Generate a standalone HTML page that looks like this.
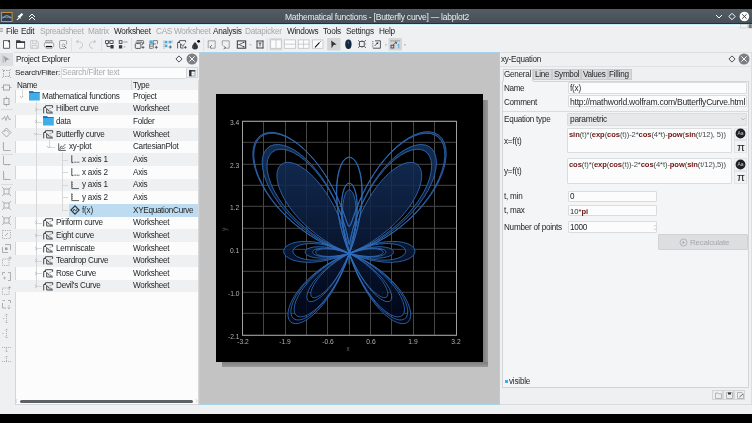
<!DOCTYPE html>
<html><head><meta charset="utf-8"><style>
html,body{margin:0;padding:0}
body{width:752px;height:423px;background:#000;position:relative;overflow:hidden;font-family:"Liberation Sans", sans-serif}
.a{position:absolute}
.t{position:absolute;white-space:nowrap;will-change:transform}
</style></head><body>
<div class="a" style="left:0px;top:9px;width:752px;height:405px;background:#eff0f1"></div><div class="a" style="left:0px;top:9px;width:752px;height:14px;background:linear-gradient(#535d64,#474f56)"></div><div class="a" style="left:0px;top:23px;width:752px;height:1px;background:#2a2f33"></div><div class="a" style="left:0px;top:24px;width:752px;height:1px;background:#c6ecf8"></div><div class="a" style="left:0px;top:25px;width:752px;height:1px;background:#f9f9f9"></div><svg class="a" style="left:1px;top:11.5px;" width="12" height="10" viewBox="0 0 12 10"><rect x="0.5" y="0.5" width="10.6" height="9" fill="#2f3e4c" stroke="#c8913f" stroke-width="1"/><path d="M1.4 6.4 Q5.8 0.8 10.2 6.4" fill="none" stroke="#9fc3dc" stroke-width="0.8"/><path d="M1 5.2 H10.6" stroke="#b8ccd8" stroke-width="0.6"/></svg><svg class="a" style="left:16px;top:12px;" width="8" height="9" viewBox="0 0 8 9"><path d="M1 8 L3.2 5.6" stroke="#fff" stroke-width="1.1"/><path d="M2.4 4.2 L5.6 1 L7.2 2.6 L4 5.8 Z" fill="#fff"/><path d="M2 3.8 L4.6 6.4" stroke="#fff" stroke-width="1.1"/></svg><svg class="a" style="left:28px;top:12px;" width="8" height="9" viewBox="0 0 8 9"><path d="M1 5 L4 2 L7 5 M1 8 L4 5 L7 8" fill="none" stroke="#fff" stroke-width="1"/></svg><div class="t" style="left:277.00px;width:200px;text-align:center;top:13.49px;font-size:8.52px;line-height:8.52px;color:#e8ecee;letter-spacing:-0.243px;">Mathematical functions - [Butterfly curve] — labplot2</div><svg class="a" style="left:714px;top:12px;" width="10" height="9" viewBox="0 0 10 9"><path d="M2 3 L5 6 L8 3" fill="none" stroke="#fff" stroke-width="1"/></svg><svg class="a" style="left:727px;top:12px;" width="10" height="9" viewBox="0 0 10 9"><path d="M5 1.3 L8.2 4.5 L5 7.7 L1.8 4.5 Z" fill="none" stroke="#fff" stroke-width="1"/></svg><svg class="a" style="left:739px;top:11px;" width="11" height="11" viewBox="0 0 11 11"><circle cx="5.4" cy="5.5" r="4.8" fill="#fcfcfc"/><path d="M3.2 3.3 L7.6 7.7 M7.6 3.3 L3.2 7.7" stroke="#31363b" stroke-width="0.9"/></svg><div class="t" style="left:5.60px;top:28.03px;font-size:8.24px;line-height:8.24px;color:#1e2123;letter-spacing:-0.217px;">File</div><div class="t" style="left:21.20px;top:28.03px;font-size:8.24px;line-height:8.24px;color:#1e2123;letter-spacing:-0.232px;">Edit</div><div class="t" style="left:39.70px;top:28.03px;font-size:8.24px;line-height:8.24px;color:#a5a8ab;letter-spacing:-0.278px;">Spreadsheet</div><div class="t" style="left:87.70px;top:28.03px;font-size:8.24px;line-height:8.24px;color:#a5a8ab;letter-spacing:-0.245px;">Matrix</div><div class="t" style="left:113.70px;top:28.03px;font-size:8.24px;line-height:8.24px;color:#1e2123;letter-spacing:-0.285px;">Worksheet</div><div class="t" style="left:156.00px;top:28.03px;font-size:8.24px;line-height:8.24px;color:#a5a8ab;letter-spacing:-0.294px;">CAS Worksheet</div><div class="t" style="left:213.20px;top:28.03px;font-size:8.24px;line-height:8.24px;color:#1e2123;letter-spacing:-0.251px;">Analysis</div><div class="t" style="left:245.40px;top:28.03px;font-size:8.24px;line-height:8.24px;color:#a5a8ab;letter-spacing:-0.258px;">Datapicker</div><div class="t" style="left:287.00px;top:28.03px;font-size:8.24px;line-height:8.24px;color:#1e2123;letter-spacing:-0.312px;">Windows</div><div class="t" style="left:322.90px;top:28.03px;font-size:8.24px;line-height:8.24px;color:#1e2123;letter-spacing:-0.252px;">Tools</div><div class="t" style="left:346.10px;top:28.03px;font-size:8.24px;line-height:8.24px;color:#1e2123;letter-spacing:-0.243px;">Settings</div><div class="t" style="left:378.70px;top:28.03px;font-size:8.24px;line-height:8.24px;color:#1e2123;letter-spacing:-0.277px;">Help</div><svg class="a" style="left:0px;top:27px;" width="4" height="6" viewBox="0 0 4 6"><path d="M0 1.5 H3 M0 3 H3 M0 4.5 H3" stroke="#888" stroke-width="0.6"/></svg><svg class="a" style="left:0;top:36px" width="410" height="16" viewBox="0 36 410 16"><path d="M3.5 40.6 H7.4 L9.6 42.8 V48.3 H3.5 Z" fill="#fcfcfc" stroke="#31363b" stroke-width="0.8"/><path d="M7.3 40.3 L10 43 V40.3 Z" fill="#31363b"/><path d="M16.5 41.6 V48.3 H24.6 V41.6" fill="#fcfcfc" stroke="#31363b" stroke-width="0.8"/><path d="M16.1 40.3 H20 L21 41.3 H25 V42.9 H16.1 Z" fill="#31363b"/><path d="M30.7 40.7 H37 L38.4 42.1 V48.3 H30.7 Z" fill="none" stroke="#bfc2c4" stroke-width="0.8"/><path d="M32.6 40.7 V43.6 H36.4 V40.7 M32.2 48.3 V45.4 H37 V48.3" fill="none" stroke="#bfc2c4" stroke-width="0.8"/><rect x="45.8" y="40.5" width="6.2" height="2.4" fill="#d0d2d4" stroke="#8c8f92" stroke-width="0.6"/><rect x="44.3" y="42.9" width="9.4" height="4" rx="1" fill="#fcfcfc" stroke="#8c8f92" stroke-width="0.8"/><rect x="46" y="45.9" width="6" height="1.2" fill="#111"/><path d="M46 47.1 V48.5 H52 V47.1" fill="none" stroke="#8c8f92" stroke-width="0.6"/><path d="M60.6 40.5 H65.6 Q66.6 40.5 66.6 41.5 V44.5 M65 48.5 H60.6 Q59.6 48.5 59.6 47.5 V41.5 Q59.6 40.5 60.6 40.5" fill="none" stroke="#8c8f92" stroke-width="0.8"/><circle cx="63.6" cy="45.4" r="1.4" fill="none" stroke="#8c8f92" stroke-width="0.7"/><path d="M64.6 46.4 L66.4 48.2" stroke="#31363b" stroke-width="0.9"/><path d="M71.4 38 V51" stroke="#d8dadc" stroke-width="0.8"/><path d="M101.7 38 V51" stroke="#d8dadc" stroke-width="0.8"/><path d="M131.6 38 V51" stroke="#d8dadc" stroke-width="0.8"/><path d="M203.7 38 V51" stroke="#d8dadc" stroke-width="0.8"/><path d="M267.3 38 V51" stroke="#d8dadc" stroke-width="0.8"/><path d="M77 41.5 Q82.6 41.5 82.6 45 Q82.6 48.3 79 48.4" fill="none" stroke="#bfc2c4" stroke-width="0.8"/><path d="M78.4 40 L76 41.6 L78.4 43.2" fill="none" stroke="#bfc2c4" stroke-width="0.8"/><path d="M95 41.5 Q89.4 41.5 89.4 45 Q89.4 48.3 93 48.4" fill="none" stroke="#bfc2c4" stroke-width="0.8"/><path d="M93.6 40 L96 41.6 L93.6 43.2" fill="none" stroke="#bfc2c4" stroke-width="0.8"/><rect x="105.6" y="40.7" width="2.9" height="2.7" fill="none" stroke="#31363b" stroke-width="0.8"/><rect x="109.8" y="40.7" width="3.3" height="2.7" fill="none" stroke="#31363b" stroke-width="0.8"/><path d="M107 43.4 V46.5 H110.5" fill="none" stroke="#31363b" stroke-width="0.8"/><rect x="110.4" y="45" width="3.2" height="3.5" fill="#31363b"/><rect x="119.2" y="40.7" width="2.8" height="2.7" fill="none" stroke="#31363b" stroke-width="0.8"/><rect x="118.9" y="45.2" width="3.3" height="3.3" fill="#31363b"/><path d="M123.4 42 H127.6" stroke="#9da0a3" stroke-width="1.1"/><path d="M123.8 46.8 H125.2" stroke="#9da0a3" stroke-width="1.2"/><path d="M136.6 40.6 H142.8 Q143.6 40.6 143.6 41.4 V44" fill="none" stroke="#31363b" stroke-width="0.7"/><path d="M135.6 42.2 H141.6 Q142.4 42.2 142.4 43 V45" fill="none" stroke="#31363b" stroke-width="0.7"/><rect x="135.3" y="43.6" width="5.6" height="4.8" rx="0.8" fill="none" stroke="#31363b" stroke-width="0.8"/><path d="M143 46 V48.8 M141.6 47.4 H144.4" stroke="#31363b" stroke-width="0.7"/><rect x="149.4" y="40.4" width="3.2" height="2.9" fill="#3daee9"/><path d="M153.3 40.6 H157.4 V44 M149.6 44 H156 M149.6 46.2 H153 M153.3 40.6 V48.4 M149.6 44 V48.4 H152.6" fill="none" stroke="#31363b" stroke-width="0.6"/><path d="M156.3 45.8 V48.8 M154.8 47.3 H157.8" stroke="#31363b" stroke-width="0.7"/><rect x="164.8" y="40.8" width="2.6" height="2.6" fill="#3daee9"/><rect x="168.6" y="40.8" width="2.6" height="2.6" fill="#3daee9"/><rect x="164.8" y="44.6" width="2.6" height="2.6" fill="#3daee9"/><path d="M163.9 40.5 V48.5 M172 40.5 V43" stroke="#31363b" stroke-width="0.5" stroke-dasharray="1 0.8"/><path d="M170.3 45.4 V48.6 M168.7 47 H171.9" stroke="#31363b" stroke-width="0.7"/><path d="M177.6 48.4 V42.6 M179.6 40.6 H185.6 V42.4" fill="none" stroke="#31363b" stroke-width="0.8"/><path d="M177.3 42.9 L179.9 40.3 V42.9 Z" fill="#31363b"/><path d="M180.6 43.4 V48 H183.6" fill="none" stroke="#31363b" stroke-width="0.8"/><path d="M181 44 L182.8 46.4 L184.6 43.6" fill="none" stroke="#31363b" stroke-width="0.7"/><path d="M185.4 46 V48.8 M184 47.4 H186.8" stroke="#31363b" stroke-width="0.7"/><path d="M195 42 Q198 45.5 198 46.6 A3 3 0 0 1 192 46.6 Q192 45.5 195 42 Z" fill="#31363b"/><path d="M194 47.8 A1.5 1.5 0 0 1 193.2 46.2" fill="none" stroke="#777" stroke-width="0.5"/><circle cx="198.6" cy="41.3" r="1.4" fill="#000"/><path d="M208.2 48.2 V40.8 H215.2 V48.2 H210.6" fill="none" stroke="#8c8f92" stroke-width="0.8"/><path d="M211.8 45.2 L209.8 47.2 L211.4 48.4" fill="none" stroke="#31363b" stroke-width="0.7"/><path d="M222.3 45.6 V40.8 H229.2 V48.2 H225" fill="none" stroke="#8c8f92" stroke-width="0.8"/><path d="M223.6 46.2 L225.6 47.6 L223.6 49" fill="none" stroke="#31363b" stroke-width="0.7"/><rect x="237.3" y="40.9" width="8.4" height="7.3" fill="none" stroke="#31363b" stroke-width="1"/><path d="M239.2 44.6 L243.6 42.4 M239.2 44.6 L243.6 46.8 M237.5 44.6 H239.2" fill="none" stroke="#31363b" stroke-width="0.7"/><circle cx="243.8" cy="42.4" r="0.7" fill="#31363b"/><circle cx="243.8" cy="46.8" r="0.7" fill="#31363b"/><path d="M249.6 44.8 H251.4" stroke="#8c8f92" stroke-width="0.7"/><path d="M256.6 41 H263.4 M256.6 48 H263.4 M257 40.6 V48.4 M263 40.6 V48.4" stroke="#31363b" stroke-width="0.9"/><path d="M258.6 43 H261.4 M260 43 V46.4" stroke="#31363b" stroke-width="0.8"/><rect x="269.4" y="38.1" width="12.8" height="12.4" rx="0.8" fill="#d9dbdd"/><rect x="270.7" y="39.9" width="10.6" height="8.4" fill="#fcfcfc" stroke="#bfc2c4" stroke-width="0.8"/><path d="M276.0 39.9 V48.3" stroke="#bfc2c4" stroke-width="0.8"/><rect x="284.3" y="39.9" width="11.1" height="8.4" fill="#fcfcfc" stroke="#bfc2c4" stroke-width="0.8"/><path d="M284.3 44.2 H295.4" stroke="#bfc2c4" stroke-width="0.8"/><rect x="298.3" y="39.9" width="10.7" height="8.4" fill="#fcfcfc" stroke="#bfc2c4" stroke-width="0.8"/><path d="M303.6 39.9 V48.3" stroke="#bfc2c4" stroke-width="0.8"/><path d="M298.3 44.2 H309" stroke="#bfc2c4" stroke-width="0.8"/><rect x="312.4" y="39.9" width="10.6" height="8.4" fill="#fcfcfc" stroke="#bfc2c4" stroke-width="0.8"/><path d="M315 47.3 L319.6 42.4" stroke="#111" stroke-width="1.1"/><path d="M319.6 42.4 L321.2 40.9" stroke="#999" stroke-width="1"/><rect x="327.1" y="38" width="13.4" height="12.5" rx="0.8" fill="#d4d6d8"/><path d="M331.2 40.5 L336.6 44.4 L333.6 45 L331.6 48.3 Z" fill="#31363b"/><ellipse cx="348.4" cy="44.3" rx="3.2" ry="4.8" fill="#16283c"/><path d="M348.4 41.5 V43.5" stroke="#3d7fc4" stroke-width="0.9"/><rect x="359.6" y="41.6" width="4.6" height="4.8" fill="none" stroke="#31363b" stroke-width="0.8"/><path d="M358 40.2 L359.4 41.4 M366 40.2 L364.4 41.4 M358 47.8 L359.4 46.6 M366 47.8 L364.4 46.6 M362 40 V40.8 M362 47.2 V48 M357.8 44 H358.6 M365.4 44 H366.2" stroke="#31363b" stroke-width="0.7"/><path d="M375 40.8 H380.4 V48.2 H373" fill="none" stroke="#31363b" stroke-width="0.8"/><path d="M372.8 41 V48" stroke="#31363b" stroke-width="0.7" stroke-dasharray="1 0.8"/><path d="M374.6 46 L377.6 43" stroke="#31363b" stroke-width="0.8"/><rect x="376.6" y="42.4" width="1.6" height="1.6" fill="#31363b"/><path d="M385 44.8 H386.8" stroke="#8c8f92" stroke-width="0.7"/><rect x="388.6" y="38" width="13.4" height="12.5" rx="0.8" fill="#d4d6d8"/><path d="M390.6 40.9 H399.6" stroke="#31363b" stroke-width="0.7" stroke-dasharray="1 1"/><rect x="391" y="45.2" width="2.8" height="2.8" fill="none" stroke="#31363b" stroke-width="0.8"/><path d="M393 45 L396.4 42.2 M394.8 42.2 H396.4 V43.8" fill="none" stroke="#31363b" stroke-width="0.7"/><path d="M397.6 45 L398.8 44.2 V48.4" fill="none" stroke="#3daee9" stroke-width="0.9"/><path d="M404 44.8 H405.8" stroke="#8c8f92" stroke-width="0.7"/></svg><svg class="a" style="left:740px;top:24px;" width="12" height="5" viewBox="0 0 12 5"><rect x="0.5" y="0.5" width="7" height="3.5" fill="none" stroke="#c4c6c8" stroke-width="0.6"/><rect x="8.6" y="0.2" width="3.2" height="4" fill="#777"/></svg><div class="a" style="left:0px;top:53px;width:13px;height:13px;background:#dcdee0"></div><svg class="a" style="left:1px;top:53.9px;" width="11" height="11" viewBox="0 0 11 11"><path d="M3 2 L8.5 5.5 L5.5 6 L4.2 8.8 Z" fill="#9a9da0"/><path d="M2.2 1.5 V9" stroke="#9a9da0" stroke-width="0.7"/></svg><svg class="a" style="left:1px;top:68.1px;" width="11" height="11" viewBox="0 0 11 11"><rect x="2.5" y="2.5" width="6" height="6" fill="none" stroke="#9a9da0" stroke-width="0.9" stroke-dasharray="1.5 1"/><path d="M1 1 L2.5 2.5 M10 1 L8.5 2.5 M1 10 L2.5 8.5 M10 10 L8.5 8.5" stroke="#9a9da0" stroke-width="0.7"/></svg><svg class="a" style="left:1px;top:82.2px;" width="11" height="11" viewBox="0 0 11 11"><rect x="2.5" y="3" width="6" height="5" fill="none" stroke="#9a9da0" stroke-width="0.9"/><path d="M0.5 5.5 H2.5 M8.5 5.5 H10.5" stroke="#9a9da0" stroke-width="0.8"/></svg><svg class="a" style="left:1px;top:96.4px;" width="11" height="11" viewBox="0 0 11 11"><rect x="3" y="2.5" width="5" height="6" fill="none" stroke="#9a9da0" stroke-width="0.9"/><path d="M5.5 0.5 V2.5 M5.5 8.5 V10.5" stroke="#9a9da0" stroke-width="0.8"/></svg><svg class="a" style="left:1px;top:112.5px;" width="11" height="11" viewBox="0 0 11 11"><path d="M0.5 6 L2 6 L3.5 3.5 L5 7.5 L6.5 2.5 L8 6.5 L10 6" fill="none" stroke="#9a9da0" stroke-width="0.8"/></svg><svg class="a" style="left:1px;top:126.7px;" width="11" height="11" viewBox="0 0 11 11"><path d="M5.5 1 L10 5.5 L5.5 10 L1 5.5 Z" fill="none" stroke="#9a9da0" stroke-width="0.9"/><path d="M3 5 Q5.5 1.5 8 6" fill="none" stroke="#9a9da0" stroke-width="0.7"/></svg><svg class="a" style="left:1px;top:140.8px;" width="11" height="11" viewBox="0 0 11 11"><path d="M2.5 1 V9.5 H9.5" fill="none" stroke="#9a9da0" stroke-width="0.8"/><path d="M1.5 3 H2.5 M1.5 6 H2.5" stroke="#9a9da0" stroke-width="0.6"/></svg><svg class="a" style="left:1px;top:155.0px;" width="11" height="11" viewBox="0 0 11 11"><path d="M2.5 1 V9.5 H9.5" fill="none" stroke="#9a9da0" stroke-width="0.8"/><path d="M5 9.5 V10.5 M7.5 9.5 V10.5" stroke="#9a9da0" stroke-width="0.6"/></svg><svg class="a" style="left:1px;top:169.9px;" width="11" height="11" viewBox="0 0 11 11"><path d="M2.5 1 V9.5 H9.5" fill="none" stroke="#9a9da0" stroke-width="0.8"/><path d="M2.5 4 H3.5 M2.5 7 H3.5 M5 8.5 V9.5" stroke="#9a9da0" stroke-width="0.6"/></svg><svg class="a" style="left:1px;top:186.1px;" width="11" height="11" viewBox="0 0 11 11"><rect x="3" y="3" width="5" height="5" fill="none" stroke="#9a9da0" stroke-width="0.8"/><path d="M1 1 L3 3 M10 1 L8 3 M1 10 L3 8 M10 10 L8 8" stroke="#9a9da0" stroke-width="0.7"/></svg><svg class="a" style="left:1px;top:200.3px;" width="11" height="11" viewBox="0 0 11 11"><rect x="3" y="3" width="5" height="5" fill="none" stroke="#9a9da0" stroke-width="0.8"/><path d="M1 1 L3 3 M10 1 L8 3 M1 10 L3 8 M10 10 L8 8" stroke="#9a9da0" stroke-width="0.7"/></svg><svg class="a" style="left:1px;top:214.9px;" width="11" height="11" viewBox="0 0 11 11"><rect x="3" y="3" width="5" height="5" fill="none" stroke="#9a9da0" stroke-width="0.8"/><path d="M1 1 L3 3 M10 1 L8 3 M1 10 L3 8 M10 10 L8 8" stroke="#9a9da0" stroke-width="0.7"/></svg><svg class="a" style="left:1px;top:228.6px;" width="11" height="11" viewBox="0 0 11 11"><rect x="1.5" y="1.5" width="8" height="8" fill="none" stroke="#9a9da0" stroke-width="0.8" stroke-dasharray="1.2 1.2"/><path d="M4 7 L7 4" stroke="#9a9da0" stroke-width="0.8"/></svg><svg class="a" style="left:1px;top:242.8px;" width="11" height="11" viewBox="0 0 11 11"><path d="M1.5 4 V9.5 H7 M4 1.5 H9.5 V7" fill="none" stroke="#9a9da0" stroke-width="0.8"/><rect x="4" y="4.5" width="2.5" height="2.5" fill="#9a9da0"/></svg><svg class="a" style="left:1px;top:256.3px;" width="11" height="11" viewBox="0 0 11 11"><rect x="1.5" y="3" width="6.5" height="6.5" fill="none" stroke="#9a9da0" stroke-width="0.8" stroke-dasharray="1.2 1.2"/><path d="M9 0.5 V3.5 M7.5 2 H10.5" stroke="#9a9da0" stroke-width="0.7"/></svg><svg class="a" style="left:1px;top:270.5px;" width="11" height="11" viewBox="0 0 11 11"><path d="M1.5 1.5 H4 M1.5 1.5 V4 M7 1.5 H9.5 V9.5 H7" fill="none" stroke="#9a9da0" stroke-width="0.8"/><path d="M2 7 H5 M3.5 5.5 V8.5" stroke="#9a9da0" stroke-width="0.6"/></svg><svg class="a" style="left:1px;top:284.9px;" width="11" height="11" viewBox="0 0 11 11"><rect x="1.5" y="3" width="6.5" height="6.5" fill="none" stroke="#9a9da0" stroke-width="0.8" stroke-dasharray="1.2 1.2"/><path d="M8.5 1 V4 M7 2.5 H10" stroke="#9a9da0" stroke-width="0.6"/></svg><svg class="a" style="left:1px;top:299.0px;" width="11" height="11" viewBox="0 0 11 11"><path d="M1.5 1.5 H4 M1.5 4 V9 H5 M7 1.5 H9.5 V4" fill="none" stroke="#9a9da0" stroke-width="0.8"/><path d="M8 6 V10 M6.5 8.5 L8 10 L9.5 8.5" fill="none" stroke="#9a9da0" stroke-width="0.6"/></svg><svg class="a" style="left:1px;top:313.2px;" width="11" height="11" viewBox="0 0 11 11"><path d="M5.5 1 V10 M4 2.5 L5.5 1 L7 2.5 M4 8.5 L5.5 10 L7 8.5 M2 5.5 H3.5" fill="none" stroke="#9a9da0" stroke-width="0.7" stroke-dasharray="1.2 0.8"/></svg><svg class="a" style="left:1px;top:327.9px;" width="11" height="11" viewBox="0 0 11 11"><path d="M5.5 1 V10 M4 2.5 L5.5 1 L7 2.5 M4 8.5 L5.5 10 L7 8.5 M1.5 5.5 H3.5" fill="none" stroke="#9a9da0" stroke-width="0.7" stroke-dasharray="1.2 0.8"/></svg><svg class="a" style="left:1px;top:342.0px;" width="11" height="11" viewBox="0 0 11 11"><path d="M1 5.5 H10 M5.5 5.5 V10 M4 8.5 L5.5 10 L7 8.5" fill="none" stroke="#9a9da0" stroke-width="0.7" stroke-dasharray="1.2 0.8"/></svg><svg class="a" style="left:1px;top:354.5px;" width="11" height="11" viewBox="0 0 11 11"><path d="M1 6.5 H10 M5.5 1 V6.5 M4 2.5 L5.5 1 L7 2.5" fill="none" stroke="#9a9da0" stroke-width="0.7" stroke-dasharray="1.2 0.8"/></svg><div class="a" style="left:0.5px;top:109.4px;width:12.5px;height:0.7px;background:#d9dbdd"></div><div class="a" style="left:0.5px;top:154.2px;width:12.5px;height:0.7px;background:#d9dbdd"></div><div class="a" style="left:0.5px;top:184.2px;width:12.5px;height:0.7px;background:#d9dbdd"></div><div class="a" style="left:14px;top:52px;width:185px;height:0.7px;background:#dcdee0"></div><div class="a" style="left:500px;top:52px;width:252px;height:0.7px;background:#dcdee0"></div><div class="a" style="left:14.5px;top:52.7px;width:184.5px;height:13.3px;background:#f3f4f5"></div><div class="t" style="left:15.70px;top:55.82px;font-size:8.13px;line-height:8.13px;color:#1e2123;letter-spacing:-0.237px;">Project Explorer</div><svg class="a" style="left:174.7px;top:55px;" width="8" height="8" viewBox="0 0 8 8"><path d="M4 0.9 L7.1 4 L4 7.1 L0.9 4 Z" fill="none" stroke="#4d5257" stroke-width="1"/></svg><svg class="a" style="left:185.5px;top:52.9px;" width="12" height="12" viewBox="0 0 12 12"><circle cx="6" cy="6" r="5.5" fill="#7b7f83"/><path d="M3.3 3.3 L8.7 8.7 M8.7 3.3 L3.3 8.7" stroke="#fcfcfc" stroke-width="1"/></svg><div class="t" style="left:14.80px;top:69.46px;font-size:8.08px;line-height:8.08px;color:#1e2123;letter-spacing:-0.224px;">Search/Filter:</div><div class="a" style="left:60.5px;top:67px;width:126px;height:11.5px;background:#fcfcfc;border:0.6px solid #dadcde;box-sizing:border-box;border-radius:1px"></div><div class="t" style="left:62.00px;top:69.42px;font-size:8.13px;line-height:8.13px;color:#a8abae;letter-spacing:-0.223px;">Search/Filter text</div><div class="a" style="left:186.3px;top:67.4px;width:12.1px;height:11px;background:#eff0f1;border:0.6px solid #d3d5d7;box-sizing:border-box;border-radius:1px"></div><svg class="a" style="left:189px;top:69.8px;" width="7" height="7" viewBox="0 0 7 7"><rect x="0.4" y="0.4" width="5.6" height="5.6" fill="#fcfcfc" stroke="#6a6e72" stroke-width="0.6"/><rect x="0.2" y="0.2" width="6" height="1.3" fill="#2a2e32"/><rect x="0.2" y="0.2" width="2.3" height="6" fill="#2a2e32"/><circle cx="4.2" cy="3.8" r="0.5" fill="#8a8d90"/></svg><div class="a" style="left:14.5px;top:79.5px;width:184px;height:325px;background:#fcfcfc;border:0.6px solid #d4d6d8;box-sizing:border-box"></div><div class="a" style="left:15px;top:80.2px;width:183px;height:10px;background:#eff0f1"></div><div class="a" style="left:130.5px;top:80.2px;width:0.6px;height:10px;background:#d4d6d8"></div><div class="t" style="left:16.90px;top:81.82px;font-size:8.13px;line-height:8.13px;color:#1e2123;letter-spacing:-0.355px;">Name</div><div class="t" style="left:132.60px;top:81.82px;font-size:8.13px;line-height:8.13px;color:#1e2123;letter-spacing:-0.288px;">Type</div><div class="a" style="left:15.1px;top:102.84px;width:182.8px;height:12.64px;background:#eff0f1"></div><div class="a" style="left:15.1px;top:128.12px;width:182.8px;height:12.64px;background:#eff0f1"></div><div class="a" style="left:15.1px;top:153.4px;width:182.8px;height:12.64px;background:#eff0f1"></div><div class="a" style="left:15.1px;top:178.68px;width:182.8px;height:12.64px;background:#eff0f1"></div><div class="a" style="left:15.1px;top:203.96px;width:182.8px;height:12.64px;background:#eff0f1"></div><div class="a" style="left:15.1px;top:229.24px;width:182.8px;height:12.64px;background:#eff0f1"></div><div class="a" style="left:15.1px;top:254.52px;width:182.8px;height:12.64px;background:#eff0f1"></div><div class="a" style="left:15.1px;top:279.8px;width:182.8px;height:12.64px;background:#eff0f1"></div><div class="a" style="left:21.5px;top:90.4px;width:0.7px;height:6.12px;background:#d6d8da"></div><div class="a" style="left:35.5px;top:101.58px;width:0.7px;height:184.54px;background:#d6d8da"></div><div class="a" style="left:48.7px;top:139.5px;width:0.7px;height:7.58px;background:#d6d8da"></div><div class="a" style="left:62px;top:152.14px;width:0.7px;height:58.14px;background:#d6d8da"></div><div class="a" style="left:68.8px;top:203.96px;width:129.4px;height:12.64px;background:#bddcf1"></div><svg class="a" style="left:19.0px;top:94.52px;" width="5" height="4" viewBox="0 0 5 4"><path d="M0.8 1 L2.5 2.8 L4.2 1" fill="none" stroke="#9a9d9f" stroke-width="0.6"/></svg><svg class="a" style="left:29.2px;top:91.0px;" width="11" height="10" viewBox="0 0 11 10"><path d="M0 0.2 H4 L5 1 H10.8 V9.4 H0 Z" fill="#3daee9"/><path d="M0 0.2 H4 L5 1.2 H10.8 V2 H0 Z" fill="#1b6ea6"/></svg><div class="t" style="left:42.40px;top:92.82px;font-size:8.13px;line-height:8.13px;color:#1e2123;letter-spacing:-0.247px;">Mathematical functions</div><div class="t" style="left:132.60px;top:92.82px;font-size:8.13px;line-height:8.13px;color:#1e2123;letter-spacing:-0.237px;">Project</div><div class="a" style="left:35.5px;top:108.96px;width:6.1px;height:0.7px;background:#d6d8da"></div><svg class="a" style="left:33.5px;top:106.66px;" width="4" height="5" viewBox="0 0 4 5"><path d="M1 0.8 L2.8 2.5 L1 4.2" fill="none" stroke="#9a9d9f" stroke-width="0.6"/></svg><svg class="a" style="left:42.8px;top:104.54px;" width="11" height="10" viewBox="0 0 11 10"><path d="M0.7 8.4 V2.6 M2.6 0.7 H9.6 V2.8" fill="none" stroke="#31363b" stroke-width="0.9"/><path d="M0.3 2.9 L2.9 0.3 V2.9 Z" fill="#31363b"/><path d="M3.7 3.2 V8 H9.8" fill="none" stroke="#31363b" stroke-width="0.9"/><path d="M4.2 3.8 L6.2 6.4 L7.2 5.4" fill="none" stroke="#31363b" stroke-width="0.8"/><path d="M5.8 4.2 L7 3.6 L8.6 2.8" fill="none" stroke="#31363b" stroke-width="0.6" stroke-dasharray="0.8 0.5"/><path d="M6.8 7 H9.4" stroke="#31363b" stroke-width="0.9"/></svg><div class="t" style="left:55.60px;top:105.46px;font-size:8.13px;line-height:8.13px;color:#1e2123;letter-spacing:-0.230px;">Hilbert curve</div><div class="t" style="left:132.60px;top:105.46px;font-size:8.13px;line-height:8.13px;color:#1e2123;letter-spacing:-0.281px;">Worksheet</div><div class="a" style="left:35.5px;top:121.6px;width:6.1px;height:0.7px;background:#d6d8da"></div><svg class="a" style="left:33.5px;top:119.3px;" width="4" height="5" viewBox="0 0 4 5"><path d="M1 0.8 L2.8 2.5 L1 4.2" fill="none" stroke="#9a9d9f" stroke-width="0.6"/></svg><svg class="a" style="left:43.2px;top:116.28px;" width="11" height="10" viewBox="0 0 11 10"><path d="M0 0.2 H4 L5 1 H10.8 V9.4 H0 Z" fill="#3daee9"/><path d="M0 0.2 H4 L5 1.2 H10.8 V2 H0 Z" fill="#1b6ea6"/></svg><div class="t" style="left:55.60px;top:118.10px;font-size:8.13px;line-height:8.13px;color:#1e2123;letter-spacing:-0.259px;">data</div><div class="t" style="left:132.60px;top:118.10px;font-size:8.13px;line-height:8.13px;color:#1e2123;letter-spacing:-0.251px;">Folder</div><div class="a" style="left:35.5px;top:134.24px;width:6.1px;height:0.7px;background:#d6d8da"></div><svg class="a" style="left:33.0px;top:132.44px;" width="5" height="4" viewBox="0 0 5 4"><path d="M0.8 1 L2.5 2.8 L4.2 1" fill="none" stroke="#9a9d9f" stroke-width="0.6"/></svg><svg class="a" style="left:42.8px;top:129.82px;" width="11" height="10" viewBox="0 0 11 10"><path d="M0.7 8.4 V2.6 M2.6 0.7 H9.6 V2.8" fill="none" stroke="#31363b" stroke-width="0.9"/><path d="M0.3 2.9 L2.9 0.3 V2.9 Z" fill="#31363b"/><path d="M3.7 3.2 V8 H9.8" fill="none" stroke="#31363b" stroke-width="0.9"/><path d="M4.2 3.8 L6.2 6.4 L7.2 5.4" fill="none" stroke="#31363b" stroke-width="0.8"/><path d="M5.8 4.2 L7 3.6 L8.6 2.8" fill="none" stroke="#31363b" stroke-width="0.6" stroke-dasharray="0.8 0.5"/><path d="M6.8 7 H9.4" stroke="#31363b" stroke-width="0.9"/></svg><div class="t" style="left:55.60px;top:130.74px;font-size:8.13px;line-height:8.13px;color:#1e2123;letter-spacing:-0.227px;">Butterfly curve</div><div class="t" style="left:132.60px;top:130.74px;font-size:8.13px;line-height:8.13px;color:#1e2123;letter-spacing:-0.281px;">Worksheet</div><div class="a" style="left:48.7px;top:146.88px;width:6.1px;height:0.7px;background:#d6d8da"></div><svg class="a" style="left:46.2px;top:145.08px;" width="5" height="4" viewBox="0 0 5 4"><path d="M0.8 1 L2.5 2.8 L4.2 1" fill="none" stroke="#9a9d9f" stroke-width="0.6"/></svg><svg class="a" style="left:57.6px;top:142.56px;" width="9" height="8" viewBox="0 0 9 8"><path d="M0.7 0.3 V7.4 H7.8" fill="none" stroke="#31363b" stroke-width="0.8"/><path d="M1.6 6.2 L3.2 3 L4.6 4.2 L7.4 1" fill="none" stroke="#31363b" stroke-width="0.7"/><path d="M2.2 6.6 L4 5 L5 5.8 L7.6 4.4" fill="none" stroke="#31363b" stroke-width="0.6"/></svg><div class="t" style="left:68.80px;top:143.38px;font-size:8.13px;line-height:8.13px;color:#1e2123;letter-spacing:-0.224px;">xy-plot</div><div class="t" style="left:132.60px;top:143.38px;font-size:8.13px;line-height:8.13px;color:#1e2123;letter-spacing:-0.246px;">CartesianPlot</div><div class="a" style="left:62px;top:159.52px;width:6.1px;height:0.7px;background:#d6d8da"></div><svg class="a" style="left:70.6px;top:155.3px;" width="9" height="9" viewBox="0 0 9 9"><path d="M0.8 0.2 V7.6 H2" fill="none" stroke="#31363b" stroke-width="0.9"/><path d="M2.6 7.2 H8.6" stroke="#31363b" stroke-width="0.9" stroke-dasharray="1 0.6"/></svg><div class="t" style="left:82.10px;top:156.02px;font-size:8.13px;line-height:8.13px;color:#1e2123;letter-spacing:-0.225px;">x axis 1</div><div class="t" style="left:132.60px;top:156.02px;font-size:8.13px;line-height:8.13px;color:#1e2123;letter-spacing:-0.251px;">Axis</div><div class="a" style="left:62px;top:172.16px;width:6.1px;height:0.7px;background:#d6d8da"></div><svg class="a" style="left:70.6px;top:167.94px;" width="9" height="9" viewBox="0 0 9 9"><path d="M0.8 0.2 V7.6 H2" fill="none" stroke="#31363b" stroke-width="0.9"/><path d="M2.6 7.2 H8.6" stroke="#31363b" stroke-width="0.9" stroke-dasharray="1 0.6"/></svg><div class="t" style="left:82.10px;top:168.66px;font-size:8.13px;line-height:8.13px;color:#1e2123;letter-spacing:-0.225px;">x axis 2</div><div class="t" style="left:132.60px;top:168.66px;font-size:8.13px;line-height:8.13px;color:#1e2123;letter-spacing:-0.251px;">Axis</div><div class="a" style="left:62px;top:184.8px;width:6.1px;height:0.7px;background:#d6d8da"></div><svg class="a" style="left:70.8px;top:180.58px;" width="9" height="9" viewBox="0 0 9 9"><path d="M0.8 0.2 V7.6 H8" fill="none" stroke="#31363b" stroke-width="0.8"/><path d="M0.8 1.6 H1.8 M0.8 3.6 H1.8 M0.8 5.6 H1.8" stroke="#31363b" stroke-width="0.6"/></svg><div class="t" style="left:82.10px;top:181.30px;font-size:8.13px;line-height:8.13px;color:#1e2123;letter-spacing:-0.225px;">y axis 1</div><div class="t" style="left:132.60px;top:181.30px;font-size:8.13px;line-height:8.13px;color:#1e2123;letter-spacing:-0.251px;">Axis</div><div class="a" style="left:62px;top:197.44px;width:6.1px;height:0.7px;background:#d6d8da"></div><svg class="a" style="left:70.8px;top:193.22px;" width="9" height="9" viewBox="0 0 9 9"><path d="M0.8 0.2 V7.6 H8" fill="none" stroke="#31363b" stroke-width="0.8"/><path d="M0.8 1.6 H1.8 M0.8 3.6 H1.8 M0.8 5.6 H1.8" stroke="#31363b" stroke-width="0.6"/></svg><div class="t" style="left:82.10px;top:193.94px;font-size:8.13px;line-height:8.13px;color:#1e2123;letter-spacing:-0.225px;">y axis 2</div><div class="t" style="left:132.60px;top:193.94px;font-size:8.13px;line-height:8.13px;color:#1e2123;letter-spacing:-0.251px;">Axis</div><div class="a" style="left:62px;top:210.08px;width:6.1px;height:0.7px;background:#d6d8da"></div><svg class="a" style="left:70.2px;top:205.16px;" width="10" height="10" viewBox="0 0 10 10"><path d="M5 0.9 L9.1 5 L5 9.1 L0.9 5 Z" fill="none" stroke="#31363b" stroke-width="1.2"/><path d="M3.2 6.2 Q4 2.6 5 5 Q6 7.6 6.8 3.8" fill="none" stroke="#31363b" stroke-width="0.8"/></svg><div class="t" style="left:82.10px;top:206.58px;font-size:8.13px;line-height:8.13px;color:#1e2123;letter-spacing:-0.192px;">f(x)</div><div class="t" style="left:132.60px;top:206.58px;font-size:8.13px;line-height:8.13px;color:#1e2123;letter-spacing:-0.282px;">XYEquationCurve</div><div class="a" style="left:35.5px;top:222.72px;width:6.1px;height:0.7px;background:#d6d8da"></div><svg class="a" style="left:33.5px;top:220.42px;" width="4" height="5" viewBox="0 0 4 5"><path d="M1 0.8 L2.8 2.5 L1 4.2" fill="none" stroke="#9a9d9f" stroke-width="0.6"/></svg><svg class="a" style="left:42.8px;top:218.3px;" width="11" height="10" viewBox="0 0 11 10"><path d="M0.7 8.4 V2.6 M2.6 0.7 H9.6 V2.8" fill="none" stroke="#31363b" stroke-width="0.9"/><path d="M0.3 2.9 L2.9 0.3 V2.9 Z" fill="#31363b"/><path d="M3.7 3.2 V8 H9.8" fill="none" stroke="#31363b" stroke-width="0.9"/><path d="M4.2 3.8 L6.2 6.4 L7.2 5.4" fill="none" stroke="#31363b" stroke-width="0.8"/><path d="M5.8 4.2 L7 3.6 L8.6 2.8" fill="none" stroke="#31363b" stroke-width="0.6" stroke-dasharray="0.8 0.5"/><path d="M6.8 7 H9.4" stroke="#31363b" stroke-width="0.9"/></svg><div class="t" style="left:55.60px;top:219.22px;font-size:8.13px;line-height:8.13px;color:#1e2123;letter-spacing:-0.234px;">Piriform curve</div><div class="t" style="left:132.60px;top:219.22px;font-size:8.13px;line-height:8.13px;color:#1e2123;letter-spacing:-0.281px;">Worksheet</div><div class="a" style="left:35.5px;top:235.36px;width:6.1px;height:0.7px;background:#d6d8da"></div><svg class="a" style="left:33.5px;top:233.06px;" width="4" height="5" viewBox="0 0 4 5"><path d="M1 0.8 L2.8 2.5 L1 4.2" fill="none" stroke="#9a9d9f" stroke-width="0.6"/></svg><svg class="a" style="left:42.8px;top:230.94px;" width="11" height="10" viewBox="0 0 11 10"><path d="M0.7 8.4 V2.6 M2.6 0.7 H9.6 V2.8" fill="none" stroke="#31363b" stroke-width="0.9"/><path d="M0.3 2.9 L2.9 0.3 V2.9 Z" fill="#31363b"/><path d="M3.7 3.2 V8 H9.8" fill="none" stroke="#31363b" stroke-width="0.9"/><path d="M4.2 3.8 L6.2 6.4 L7.2 5.4" fill="none" stroke="#31363b" stroke-width="0.8"/><path d="M5.8 4.2 L7 3.6 L8.6 2.8" fill="none" stroke="#31363b" stroke-width="0.6" stroke-dasharray="0.8 0.5"/><path d="M6.8 7 H9.4" stroke="#31363b" stroke-width="0.9"/></svg><div class="t" style="left:55.60px;top:231.86px;font-size:8.13px;line-height:8.13px;color:#1e2123;letter-spacing:-0.242px;">Eight curve</div><div class="t" style="left:132.60px;top:231.86px;font-size:8.13px;line-height:8.13px;color:#1e2123;letter-spacing:-0.281px;">Worksheet</div><div class="a" style="left:35.5px;top:248.0px;width:6.1px;height:0.7px;background:#d6d8da"></div><svg class="a" style="left:33.5px;top:245.7px;" width="4" height="5" viewBox="0 0 4 5"><path d="M1 0.8 L2.8 2.5 L1 4.2" fill="none" stroke="#9a9d9f" stroke-width="0.6"/></svg><svg class="a" style="left:42.8px;top:243.58px;" width="11" height="10" viewBox="0 0 11 10"><path d="M0.7 8.4 V2.6 M2.6 0.7 H9.6 V2.8" fill="none" stroke="#31363b" stroke-width="0.9"/><path d="M0.3 2.9 L2.9 0.3 V2.9 Z" fill="#31363b"/><path d="M3.7 3.2 V8 H9.8" fill="none" stroke="#31363b" stroke-width="0.9"/><path d="M4.2 3.8 L6.2 6.4 L7.2 5.4" fill="none" stroke="#31363b" stroke-width="0.8"/><path d="M5.8 4.2 L7 3.6 L8.6 2.8" fill="none" stroke="#31363b" stroke-width="0.6" stroke-dasharray="0.8 0.5"/><path d="M6.8 7 H9.4" stroke="#31363b" stroke-width="0.9"/></svg><div class="t" style="left:55.60px;top:244.50px;font-size:8.13px;line-height:8.13px;color:#1e2123;letter-spacing:-0.272px;">Lemniscate</div><div class="t" style="left:132.60px;top:244.50px;font-size:8.13px;line-height:8.13px;color:#1e2123;letter-spacing:-0.281px;">Worksheet</div><div class="a" style="left:35.5px;top:260.64px;width:6.1px;height:0.7px;background:#d6d8da"></div><svg class="a" style="left:33.5px;top:258.34px;" width="4" height="5" viewBox="0 0 4 5"><path d="M1 0.8 L2.8 2.5 L1 4.2" fill="none" stroke="#9a9d9f" stroke-width="0.6"/></svg><svg class="a" style="left:42.8px;top:256.22px;" width="11" height="10" viewBox="0 0 11 10"><path d="M0.7 8.4 V2.6 M2.6 0.7 H9.6 V2.8" fill="none" stroke="#31363b" stroke-width="0.9"/><path d="M0.3 2.9 L2.9 0.3 V2.9 Z" fill="#31363b"/><path d="M3.7 3.2 V8 H9.8" fill="none" stroke="#31363b" stroke-width="0.9"/><path d="M4.2 3.8 L6.2 6.4 L7.2 5.4" fill="none" stroke="#31363b" stroke-width="0.8"/><path d="M5.8 4.2 L7 3.6 L8.6 2.8" fill="none" stroke="#31363b" stroke-width="0.6" stroke-dasharray="0.8 0.5"/><path d="M6.8 7 H9.4" stroke="#31363b" stroke-width="0.9"/></svg><div class="t" style="left:55.60px;top:257.14px;font-size:8.13px;line-height:8.13px;color:#1e2123;letter-spacing:-0.262px;">Teardrop Curve</div><div class="t" style="left:132.60px;top:257.14px;font-size:8.13px;line-height:8.13px;color:#1e2123;letter-spacing:-0.281px;">Worksheet</div><div class="a" style="left:35.5px;top:273.28px;width:6.1px;height:0.7px;background:#d6d8da"></div><svg class="a" style="left:33.5px;top:270.98px;" width="4" height="5" viewBox="0 0 4 5"><path d="M1 0.8 L2.8 2.5 L1 4.2" fill="none" stroke="#9a9d9f" stroke-width="0.6"/></svg><svg class="a" style="left:42.8px;top:268.86px;" width="11" height="10" viewBox="0 0 11 10"><path d="M0.7 8.4 V2.6 M2.6 0.7 H9.6 V2.8" fill="none" stroke="#31363b" stroke-width="0.9"/><path d="M0.3 2.9 L2.9 0.3 V2.9 Z" fill="#31363b"/><path d="M3.7 3.2 V8 H9.8" fill="none" stroke="#31363b" stroke-width="0.9"/><path d="M4.2 3.8 L6.2 6.4 L7.2 5.4" fill="none" stroke="#31363b" stroke-width="0.8"/><path d="M5.8 4.2 L7 3.6 L8.6 2.8" fill="none" stroke="#31363b" stroke-width="0.6" stroke-dasharray="0.8 0.5"/><path d="M6.8 7 H9.4" stroke="#31363b" stroke-width="0.9"/></svg><div class="t" style="left:55.60px;top:269.78px;font-size:8.13px;line-height:8.13px;color:#1e2123;letter-spacing:-0.281px;">Rose Curve</div><div class="t" style="left:132.60px;top:269.78px;font-size:8.13px;line-height:8.13px;color:#1e2123;letter-spacing:-0.281px;">Worksheet</div><div class="a" style="left:35.5px;top:285.92px;width:6.1px;height:0.7px;background:#d6d8da"></div><svg class="a" style="left:33.5px;top:283.62px;" width="4" height="5" viewBox="0 0 4 5"><path d="M1 0.8 L2.8 2.5 L1 4.2" fill="none" stroke="#9a9d9f" stroke-width="0.6"/></svg><svg class="a" style="left:42.8px;top:281.5px;" width="11" height="10" viewBox="0 0 11 10"><path d="M0.7 8.4 V2.6 M2.6 0.7 H9.6 V2.8" fill="none" stroke="#31363b" stroke-width="0.9"/><path d="M0.3 2.9 L2.9 0.3 V2.9 Z" fill="#31363b"/><path d="M3.7 3.2 V8 H9.8" fill="none" stroke="#31363b" stroke-width="0.9"/><path d="M4.2 3.8 L6.2 6.4 L7.2 5.4" fill="none" stroke="#31363b" stroke-width="0.8"/><path d="M5.8 4.2 L7 3.6 L8.6 2.8" fill="none" stroke="#31363b" stroke-width="0.6" stroke-dasharray="0.8 0.5"/><path d="M6.8 7 H9.4" stroke="#31363b" stroke-width="0.9"/></svg><div class="t" style="left:55.60px;top:282.42px;font-size:8.13px;line-height:8.13px;color:#1e2123;letter-spacing:-0.240px;">Devil&#39;s Curve</div><div class="t" style="left:132.60px;top:282.42px;font-size:8.13px;line-height:8.13px;color:#1e2123;letter-spacing:-0.281px;">Worksheet</div><div class="a" style="left:19.5px;top:400px;width:173.5px;height:3.2px;background:#5d6165;border-radius:1.6px"></div><svg class="a" style="left:15px;top:398px;" width="3" height="6" viewBox="0 0 3 6"><path d="M2.2 1 L0.8 3 L2.2 5" fill="none" stroke="#b0b3b5" stroke-width="0.5"/></svg><svg class="a" style="left:195px;top:398px;" width="3" height="6" viewBox="0 0 3 6"><path d="M0.8 1 L2.2 3 L0.8 5" fill="none" stroke="#b0b3b5" stroke-width="0.5"/></svg><div class="a" style="left:199px;top:52px;width:300.5px;height:352.5px;background:#c3c3c3;border:1px solid #a6d2ea;box-sizing:border-box"></div><div class="a" style="left:483px;top:100px;width:5px;height:267px;background:linear-gradient(90deg,#7d7d7d,#9a9a9a)"></div><div class="a" style="left:222px;top:361.6px;width:266px;height:5.4px;background:linear-gradient(#7d7d7d,#9a9a9a)"></div><div class="a" style="left:216px;top:94.2px;width:267px;height:267.4px;background:#000"></div><svg class="a" style="left:216px;top:94.2px;" width="267" height="267" viewBox="0 0 267 267"><defs><linearGradient id="fg" x1="0" y1="0" x2="0" y2="1" gradientUnits="objectBoundingBox"><stop offset="0" stop-color="#173766"/><stop offset="1" stop-color="#01061a"/></linearGradient></defs><path d="M26.50 27.20 V241.10 M26.60 27.30 H240.00 M47.50 27.20 V241.10 M26.60 48.30 H240.00 M69.50 27.20 V241.10 M26.60 70.30 H240.00 M90.50 27.20 V241.10 M26.60 91.30 H240.00 M111.50 27.20 V241.10 M26.60 112.30 H240.00 M133.50 27.20 V241.10 M26.60 134.30 H240.00 M154.50 27.20 V241.10 M26.60 155.30 H240.00 M175.50 27.20 V241.10 M26.60 177.30 H240.00 M197.50 27.20 V241.10 M26.60 198.30 H240.00 M218.50 27.20 V241.10 M26.60 219.30 H240.00 M240.50 27.20 V241.10 M26.60 241.30 H240.00" stroke="#474747" stroke-width="1" fill="none"/><rect x="26.50" y="27.30" width="214.00" height="214.00" fill="none" stroke="#a0a0a0" stroke-width="1"/><path d="M133.30 131.49 L134.07 130.95 L134.93 129.31 L135.96 126.64 L137.25 122.98 L138.87 118.42 L140.89 113.07 L143.35 107.06 L146.28 100.52 L149.71 93.60 L153.64 86.48 L158.06 79.31 L162.92 72.26 L168.19 65.50 L173.79 59.19 L179.64 53.46 L185.66 48.47 L191.73 44.33 L197.75 41.13 L203.59 38.95 L209.13 37.85 L214.26 37.86 L218.84 38.99 L222.78 41.22 L225.97 44.50 L228.32 48.77 L229.75 53.96 L230.21 59.95 L229.64 66.63 L228.05 73.87 L225.41 81.53 L221.76 89.46 L217.14 97.51 L211.61 105.54 L205.26 113.41 L198.18 120.97 L190.51 128.12 L182.36 134.75 L173.88 140.76 L165.22 146.07 L156.55 150.66 L148.01 154.47 L139.77 157.50 L131.96 159.78 L124.75 161.32 L118.25 162.18 L112.58 162.45 L107.84 162.19 L104.11 161.52 L101.46 160.54 L99.90 159.37 L99.47 158.13 L100.15 156.93 L101.90 155.91 L104.68 155.15 L108.40 154.78 L112.98 154.86 L118.30 155.48 L124.23 156.69 L130.64 158.52 L137.39 160.99 L144.32 164.09 L151.29 167.78 L158.14 172.03 L164.72 176.77 L170.91 181.90 L176.58 187.32 L181.62 192.92 L185.93 198.57 L189.44 204.13 L192.09 209.48 L193.84 214.45 L194.68 218.93 L194.62 222.78 L193.68 225.87 L191.91 228.12 L189.38 229.41 L186.15 229.69 L182.33 228.91 L178.03 227.03 L173.35 224.06 L168.41 220.01 L163.33 214.94 L158.24 208.91 L153.25 202.01 L148.46 194.37 L143.99 186.10 L139.91 177.37 L136.30 168.33 L133.22 159.16 L130.70 150.02 L128.78 141.10 L127.46 132.57 L126.72 124.60 L126.53 117.36 L126.85 110.98 L127.61 105.61 L128.75 101.34 L130.16 98.26 L131.77 96.44 L133.47 95.92 L135.16 96.70 L136.74 98.77 L138.11 102.08 L139.17 106.58 L139.86 112.16 L140.08 118.72 L139.79 126.11 L138.93 134.20 L137.49 142.82 L135.45 151.79 L132.83 160.95 L129.64 170.11 L125.93 179.09 L121.77 187.74 L117.23 195.89 L112.40 203.39 L107.38 210.12 L102.29 215.96 L97.23 220.83 L92.34 224.66 L87.73 227.42 L83.52 229.07 L79.82 229.64 L76.73 229.15 L74.34 227.65 L72.74 225.23 L71.98 221.97 L72.11 217.99 L73.14 213.40 L75.08 208.34 L77.91 202.95 L81.59 197.35 L86.06 191.70 L91.24 186.13 L97.03 180.76 L103.32 175.70 L109.98 171.06 L116.87 166.92 L123.85 163.34 L130.76 160.38 L137.46 158.04 L143.80 156.34 L149.63 155.26 L154.82 154.76 L159.24 154.78 L162.79 155.24 L165.38 156.07 L166.93 157.14 L167.40 158.37 L166.75 159.61 L164.98 160.77 L162.12 161.70 L158.19 162.31 L153.27 162.49 L147.43 162.12 L140.79 161.14 L133.45 159.47 L125.56 157.06 L117.25 153.89 L108.68 149.94 L100.00 145.22 L91.37 139.78 L82.96 133.66 L74.89 126.94 L67.33 119.72 L60.40 112.10 L54.21 104.22 L48.86 96.19 L44.43 88.18 L40.98 80.31 L38.55 72.75 L37.16 65.64 L36.81 59.11 L37.46 53.30 L39.08 48.31 L41.60 44.26 L44.94 41.21 L49.01 39.23 L53.71 38.35 L58.92 38.60 L64.53 39.94 L70.41 42.36 L76.43 45.79 L82.49 50.14 L88.47 55.32 L94.27 61.20 L99.80 67.65 L104.97 74.51 L109.73 81.63 L114.03 88.83 L117.84 95.96 L121.15 102.84 L123.97 109.32 L126.31 115.24 L128.22 120.47 L129.74 124.89 L130.95 128.39 L131.91 130.89 L132.72 132.34 L133.44 132.69 L134.19 131.95 L135.04 130.14 L136.08 127.28 L137.40 123.46 L139.05 118.76 L141.11 113.29 L143.62 107.17 L146.61 100.57 L150.10 93.62 L154.08 86.48 L158.54 79.34 L163.44 72.35 L168.72 65.68 L174.33 59.48 L180.17 53.90 L186.15 49.08 L192.17 45.12 L198.10 42.12 L203.83 40.15 L209.24 39.27 L214.21 39.50 L218.61 40.84 L222.35 43.27 L225.31 46.74 L227.42 51.19 L228.60 56.53 L228.78 62.65 L227.95 69.43 L226.08 76.73 L223.17 84.42 L219.26 92.35 L214.38 100.38 L208.62 108.34 L202.04 116.11 L194.77 123.56 L186.93 130.56 L178.63 137.01 L170.04 142.83 L161.31 147.94 L152.59 152.31 L144.03 155.90 L135.80 158.70 L128.05 160.75 L120.90 162.07 L114.50 162.73 L108.96 162.79 L104.36 162.36 L100.79 161.52 L98.31 160.39 L96.93 159.10 L96.67 157.75 L97.53 156.47 L99.45 155.38 L102.38 154.58 L106.25 154.17 L110.95 154.24 L116.38 154.85 L122.39 156.05 L128.86 157.88 L135.64 160.34 L142.57 163.42 L149.51 167.10 L156.31 171.31 L162.83 175.98 L168.92 181.04 L174.48 186.36 L179.38 191.83 L183.55 197.32 L186.91 202.70 L189.40 207.83 L191.00 212.56 L191.70 216.76 L191.49 220.31 L190.43 223.09 L188.55 224.99 L185.92 225.93 L182.63 225.84 L178.77 224.68 L174.44 222.43 L169.77 219.08 L164.88 214.67 L159.88 209.24 L154.89 202.88 L150.02 195.67 L145.40 187.74 L141.10 179.22 L137.22 170.27 L133.84 161.05 L130.99 151.73 L128.72 142.48 L127.06 133.49 L126.00 124.93 L125.52 116.97 L125.59 109.77 L126.16 103.47 L127.16 98.20 L128.53 94.05 L130.17 91.12 L131.98 89.46 L133.87 89.11 L135.73 90.07 L137.47 92.32 L138.98 95.81 L140.18 100.46 L140.98 106.19 L141.31 112.88 L141.12 120.39 L140.37 128.56 L139.03 137.24 L137.09 146.25 L134.58 155.41 L131.51 164.55 L127.94 173.50 L123.93 182.08 L119.56 190.14 L114.92 197.53 L110.11 204.14 L105.25 209.85 L100.46 214.59 L95.86 218.28 L91.56 220.91 L87.68 222.44 L84.33 222.90 L81.61 222.33 L79.62 220.77 L78.42 218.32 L78.07 215.06 L78.61 211.11 L80.05 206.59 L82.40 201.63 L85.63 196.38 L89.69 190.97 L94.53 185.54 L100.05 180.22 L106.16 175.14 L112.73 170.41 L119.65 166.12 L126.76 162.36 L133.92 159.18 L140.99 156.62 L147.80 154.71 L154.21 153.44 L160.09 152.80 L165.28 152.73 L169.68 153.18 L173.18 154.07 L175.69 155.30 L177.15 156.77 L177.50 158.38 L176.72 159.99 L174.82 161.49 L171.82 162.76 L167.76 163.68 L162.70 164.15 L156.74 164.07 L149.98 163.37 L142.54 161.97 L134.57 159.83 L126.19 156.92 L117.57 153.24 L108.87 148.80 L100.24 143.65 L91.83 137.84 L83.79 131.45 L76.27 124.57 L69.39 117.32 L63.26 109.83 L57.97 102.23 L53.60 94.67 L50.21 87.28 L47.84 80.23 L46.49 73.65 L46.15 67.67 L46.81 62.44 L48.40 58.04 L50.87 54.59 L54.13 52.15 L58.09 50.79 L62.64 50.52 L67.66 51.37 L73.05 53.31 L78.66 56.29 L84.39 60.27 L90.12 65.14 L95.74 70.81 L101.14 77.13 L106.24 83.99 L110.97 91.21 L115.26 98.65 L119.07 106.13 L122.38 113.48 L125.18 120.54 L127.47 127.15 L129.29 133.16 L130.68 138.44 L131.69 142.87 L132.38 146.34 L132.84 148.79 L133.15 150.15 L133.40 150.41 L133.67 149.55 L134.07 147.60 L134.66 144.61 L135.54 140.65 L136.77 135.81 L138.41 130.20 L140.51 123.97 L143.08 117.24 L146.16 110.19 L149.72 102.97 L153.76 95.75 L158.23 88.69 L163.07 81.97 L168.22 75.73 L173.59 70.11 L179.08 65.25 L184.58 61.26 L189.98 58.22 L195.16 56.21 L200.00 55.27 L204.38 55.42 L208.18 56.66 L211.30 58.96 L213.64 62.28 L215.11 66.53 L215.64 71.63 L215.19 77.48 L213.72 83.93 L211.23 90.87 L207.71 98.15 L203.21 105.62 L197.77 113.13 L191.46 120.55 L184.39 127.72 L176.65 134.53 L168.38 140.86 L159.70 146.60 L150.78 151.68 L141.75 156.03 L132.79 159.61 L124.04 162.40 L115.67 164.41 L107.82 165.64 L100.62 166.15 L94.21 166.00 L88.69 165.26 L84.16 164.03 L80.69 162.42 L78.33 160.54 L77.10 158.50 L77.02 156.43 L78.05 154.45 L80.17 152.68 L83.30 151.21 L87.37 150.16 L92.28 149.59 L97.90 149.57 L104.11 150.16 L110.77 151.38 L117.72 153.23 L124.82 155.71 L131.93 158.77 L138.88 162.36 L145.54 166.40 L151.77 170.81 L157.47 175.47 L162.52 180.26 L166.83 185.06 L170.34 189.73 L173.00 194.13 L174.78 198.12 L175.67 201.56 L175.69 204.34 L174.88 206.35 L173.28 207.47 L170.96 207.63 L168.02 206.77 L164.54 204.85 L160.64 201.85 L156.44 197.78 L152.05 192.67 L147.59 186.59 L143.18 179.60 L138.93 171.81 L134.95 163.35 L131.33 154.36 L128.16 144.98 L125.50 135.39 L123.40 125.76 L121.90 116.26 L121.01 107.08 L120.72 98.40 L121.03 90.37 L121.87 83.15 L123.22 76.89 L124.99 71.70 L127.10 67.69 L129.48 64.93 L132.01 63.48 L134.60 63.36 L137.14 64.58 L139.54 67.11 L141.69 70.90 L143.51 75.86 L144.91 81.91 L145.83 88.91 L146.22 96.72 L146.03 105.20 L145.25 114.18 L143.86 123.48 L141.90 132.92 L139.38 142.33 L136.36 151.54 L132.90 160.37 L129.10 168.68 L125.03 176.32 L120.81 183.18 L116.54 189.14 L112.36 194.14 L108.37 198.11 L104.69 201.02 L101.44 202.87 L98.73 203.67 L96.66 203.47 L95.30 202.31 L94.73 200.29 L95.01 197.51 L96.16 194.07 L98.19 190.11 L101.11 185.76 L104.89 181.15 L109.46 176.43 L114.77 171.72 L120.73 167.17 L127.23 162.89 L134.16 158.98 L141.37 155.55 L148.72 152.66 L156.08 150.37 L163.29 148.72 L170.19 147.72 L176.64 147.37 L182.49 147.63 L187.62 148.46 L191.91 149.80 L195.26 151.56 L197.58 153.64 L198.82 155.94 L198.92 158.35 L197.86 160.73 L195.67 162.98 L192.35 164.96 L187.96 166.58 L182.58 167.71 L176.29 168.27 L169.20 168.18 L161.44 167.37 L153.14 165.81 L144.46 163.46 L135.55 160.33 L126.56 156.44 L117.65 151.83 L108.98 146.55 L100.70 140.71 L92.94 134.38 L85.82 127.69 L79.45 120.76 L73.94 113.73 L69.34 106.75 L65.71 99.97 L63.09 93.52 L61.48 87.55 L60.86 82.19 L61.22 77.58 L62.49 73.80 L64.62 70.96 L67.50 69.13 L71.06 68.35 L75.17 68.66 L79.73 70.05 L84.62 72.50 L89.71 75.97 L94.88 80.38 L100.02 85.65 L105.03 91.66 L109.80 98.29 L114.26 105.39 L118.32 112.80 L121.94 120.37 L125.07 127.92 L127.70 135.28 L129.82 142.30 L131.44 148.82 L132.60 154.68 L133.34 159.76 L133.72 163.95 L133.80 167.14 L133.67 169.27 L133.42 170.29 L133.13 170.18 L132.89 168.94 L132.80 166.59 L132.93 163.19 L133.38 158.81 L134.19 153.57 L135.44 147.56 L137.16 140.93 L139.38 133.83 L142.11 126.41 L145.35 118.85 L149.06 111.30 L153.20 103.94 L157.73 96.92 L162.55 90.41 L167.60 84.54 L172.76 79.43 L177.92 75.20 L182.98 71.93 L187.81 69.68 L192.29 68.51 L196.30 68.42 L199.73 69.41 L202.47 71.45 L204.43 74.48 L205.53 78.44 L205.69 83.21 L204.88 88.70 L203.07 94.77 L200.24 101.30 L196.42 108.14 L191.63 115.14 L185.94 122.16 L179.42 129.05 L172.16 135.68 L164.28 141.92 L155.91 147.66 L147.18 152.80 L138.25 157.28 L129.26 161.02 L120.38 163.99 L111.76 166.18 L103.56 167.59 L95.93 168.25 L88.99 168.21 L82.87 167.53 L77.68 166.29 L73.50 164.59 L70.40 162.55 L68.43 160.26 L67.61 157.86 L67.94 155.47 L69.39 153.20 L71.93 151.18 L75.47 149.49 L79.94 148.25 L85.23 147.53 L91.21 147.39 L97.76 147.87 L104.73 149.00 L111.98 150.78 L119.35 153.19 L126.69 156.19 L133.86 159.73 L140.70 163.72 L147.11 168.06 L152.94 172.66 L158.11 177.37 L162.53 182.09 L166.14 186.66 L168.88 190.94 L170.75 194.81 L171.72 198.12 L171.82 200.76 L171.09 202.61 L169.58 203.59 L167.37 203.60 L164.55 202.59 L161.21 200.53 L157.46 197.40 L153.42 193.22 L149.20 188.02 L144.94 181.87 L140.74 174.85 L136.72 167.07 L132.97 158.64 L129.60 149.72 L126.68 140.46 L124.26 131.03 L122.41 121.60 L121.15 112.35 L120.48 103.46 L120.41 95.10 L120.91 87.44 L121.93 80.62 L123.43 74.78 L125.32 70.04 L127.53 66.50 L129.96 64.23 L132.52 63.28 L135.11 63.66 L137.62 65.38 L139.94 68.39 L142.00 72.64 L143.69 78.06 L144.94 84.52 L145.68 91.91 L145.87 100.09 L145.46 108.89 L144.45 118.14 L142.82 127.68 L140.61 137.31 L137.84 146.88 L134.58 156.19 L130.88 165.09 L126.84 173.43 L122.55 181.06 L118.12 187.88 L113.66 193.78 L109.30 198.68 L105.15 202.54 L101.33 205.32 L97.95 207.03 L95.12 207.68 L92.94 207.32 L91.50 206.01 L90.84 203.85 L91.04 200.92 L92.11 197.36 L94.06 193.28 L96.90 188.81 L100.57 184.11 L105.04 179.30 L110.22 174.52 L116.03 169.90 L122.36 165.56 L129.09 161.60 L136.09 158.11 L143.20 155.16 L150.29 152.81 L157.19 151.09 L163.77 150.00 L169.87 149.53 L175.36 149.66 L180.11 150.33 L184.00 151.48 L186.94 153.01 L188.84 154.84 L189.66 156.84 L189.34 158.92 L187.89 160.93 L185.30 162.77 L181.61 164.31 L176.88 165.45 L171.18 166.08 L164.60 166.10 L157.26 165.45 L149.29 164.07 L140.83 161.91 L132.03 158.96 L123.04 155.22 L114.02 150.72 L105.14 145.50 L96.53 139.64 L88.35 133.20 L80.74 126.31 L73.81 119.08 L67.68 111.63 L62.42 104.12 L58.11 96.67 L54.79 89.45 L52.50 82.60 L51.24 76.25 L50.99 70.55 L51.72 65.61 L53.36 61.54 L55.86 58.42 L59.13 56.33 L63.05 55.30 L67.53 55.37 L72.45 56.53 L77.69 58.75 L83.12 61.98 L88.63 66.16 L94.10 71.18 L99.43 76.93 L104.53 83.28 L109.30 90.08 L113.69 97.18 L117.63 104.42 L121.10 111.62 L124.07 118.62 L126.55 125.26 L128.55 131.38 L130.10 136.84 L131.26 141.51 L132.08 145.29 L132.63 148.08 L132.99 149.81 L133.25 150.45 L133.50 149.97 L133.84 148.38 L134.34 145.73 L135.09 142.05 L136.17 137.45 L137.64 132.01 L139.55 125.87 L141.94 119.16 L144.84 112.03 L148.25 104.64 L152.16 97.15 L156.55 89.75 L161.35 82.58 L166.52 75.82 L171.97 69.61 L177.62 64.10 L183.36 59.40 L189.07 55.62 L194.65 52.83 L199.97 51.11 L204.91 50.49 L209.35 50.97 L213.18 52.56 L216.29 55.20 L218.59 58.85 L220.00 63.42 L220.46 68.81 L219.93 74.92 L218.37 81.61 L215.79 88.74 L212.20 96.17 L207.65 103.75 L202.18 111.34 L195.89 118.80 L188.87 125.98 L181.24 132.77 L173.12 139.05 L164.65 144.74 L155.99 149.75 L147.29 154.04 L138.71 157.56 L130.40 160.32 L122.52 162.30 L115.21 163.56 L108.60 164.14 L102.81 164.10 L97.95 163.53 L94.09 162.53 L91.31 161.20 L89.63 159.67 L89.08 158.05 L89.66 156.46 L91.33 155.03 L94.04 153.86 L97.73 153.05 L102.30 152.70 L107.64 152.88 L113.63 153.65 L120.13 155.04 L127.01 157.08 L134.11 159.76 L141.27 163.06 L148.36 166.94 L155.21 171.32 L161.71 176.13 L167.71 181.27 L173.10 186.62 L177.79 192.06 L181.69 197.45 L184.74 202.65 L186.91 207.53 L188.17 211.95 L188.53 215.77 L188.01 218.88 L186.64 221.16 L184.50 222.52 L181.65 222.90 L178.19 222.22 L174.21 220.47 L169.84 217.63 L165.19 213.72 L160.38 208.78 L155.52 202.89 L150.74 196.11 L146.15 188.57 L141.84 180.40 L137.91 171.73 L134.43 162.74 L131.47 153.58 L129.07 144.43 L127.26 135.47 L126.03 126.88 L125.40 118.83 L125.31 111.47 L125.75 104.97 L126.63 99.44 L127.90 95.01 L129.46 91.77 L131.23 89.77 L133.11 89.08 L134.99 89.69 L136.78 91.61 L138.37 94.79 L139.67 99.16 L140.59 104.65 L141.07 111.15 L141.03 118.51 L140.44 126.60 L139.26 135.26 L137.47 144.31 L135.09 153.59 L132.13 162.91 L128.64 172.09 L124.67 180.97 L120.30 189.38 L115.62 197.17 L110.72 204.22 L105.72 210.41 L100.73 215.63 L95.87 219.84 L91.26 222.97 L87.02 225.00 L83.27 225.95 L80.10 225.82 L77.61 224.69 L75.89 222.60 L74.99 219.66 L74.97 215.97 L75.84 211.65 L77.62 206.83 L80.29 201.64 L83.82 196.23 L88.14 190.73 L93.19 185.28 L98.86 180.00 L105.05 175.02 L111.63 170.43 L118.47 166.32 L125.42 162.76 L132.34 159.80 L139.06 157.46 L145.45 155.76 L151.36 154.68 L156.65 154.18 L161.19 154.22 L164.88 154.71 L167.62 155.58 L169.33 156.72 L169.96 158.02 L169.48 159.36 L167.88 160.63 L165.18 161.71 L161.40 162.48 L156.60 162.82 L150.88 162.65 L144.32 161.86 L137.05 160.40 L129.19 158.20 L120.88 155.24 L112.28 151.50 L103.54 146.98 L94.82 141.72 L86.28 135.77 L78.06 129.20 L70.32 122.10 L63.18 114.58 L56.76 106.76 L51.17 98.77 L46.48 90.76 L42.76 82.86 L40.06 75.23 L38.40 68.02 L37.77 61.37 L38.16 55.40 L39.53 50.23 L41.81 45.97 L44.94 42.70 L48.82 40.48 L53.34 39.37 L58.41 39.36 L63.89 40.46 L69.67 42.64 L75.63 45.84 L81.65 49.98 L87.61 54.96 L93.41 60.68 L98.96 66.98 L104.18 73.73 L108.99 80.76 L113.36 87.92 L117.24 95.03 L120.63 101.92 L123.52 108.44 L125.93 114.43 L127.91 119.76 L129.49 124.30 L130.74 127.93 L131.74 130.58 L132.57 132.19 L133.30 132.71" fill="url(#fg)" fill-opacity="0.85" fill-rule="evenodd" stroke="#2e6cb9" stroke-width="0.85" stroke-linejoin="round"/></svg><div class="t" style="left:142.60px;width:200px;text-align:center;top:339.03px;font-size:6.70px;line-height:6.70px;color:#b0b0b0;">-3.2</div><div class="t" style="left:185.28px;width:200px;text-align:center;top:339.03px;font-size:6.70px;line-height:6.70px;color:#b0b0b0;">-1.9</div><div class="t" style="left:227.96px;width:200px;text-align:center;top:339.03px;font-size:6.70px;line-height:6.70px;color:#b0b0b0;">-0.6</div><div class="t" style="left:270.64px;width:200px;text-align:center;top:339.03px;font-size:6.70px;line-height:6.70px;color:#b0b0b0;">0.6</div><div class="t" style="left:313.32px;width:200px;text-align:center;top:339.03px;font-size:6.70px;line-height:6.70px;color:#b0b0b0;">1.9</div><div class="t" style="left:356.00px;width:200px;text-align:center;top:339.03px;font-size:6.70px;line-height:6.70px;color:#b0b0b0;">3.2</div><div class="t" style="right:512.50px;top:333.73px;font-size:6.70px;line-height:6.70px;color:#b0b0b0;">-2.1</div><div class="t" style="right:512.50px;top:290.95px;font-size:6.70px;line-height:6.70px;color:#b0b0b0;">-1.0</div><div class="t" style="right:512.50px;top:248.17px;font-size:6.70px;line-height:6.70px;color:#b0b0b0;">0.1</div><div class="t" style="right:512.50px;top:205.39px;font-size:6.70px;line-height:6.70px;color:#b0b0b0;">1.2</div><div class="t" style="right:512.50px;top:162.61px;font-size:6.70px;line-height:6.70px;color:#b0b0b0;">2.3</div><div class="t" style="right:512.50px;top:119.83px;font-size:6.70px;line-height:6.70px;color:#b0b0b0;">3.4</div><div class="t" style="left:247.60px;width:200px;text-align:center;top:346.18px;font-size:6.40px;line-height:6.40px;color:#5d666c;">x</div><div class="t" style="left:223px;top:226px;font-size:6.4px;line-height:6.4px;color:#5d666c;transform:rotate(-90deg)">y</div><div class="t" style="left:501.00px;top:56.32px;font-size:8.13px;line-height:8.13px;color:#1e2123;letter-spacing:-0.255px;">xy-Equation</div><svg class="a" style="left:727.5px;top:55px;" width="8" height="8" viewBox="0 0 8 8"><path d="M4 0.9 L7.1 4 L4 7.1 L0.9 4 Z" fill="none" stroke="#4d5257" stroke-width="1"/></svg><svg class="a" style="left:738.1px;top:53.1px;" width="12" height="12" viewBox="0 0 12 12"><circle cx="6" cy="6" r="5.5" fill="#7b7f83"/><path d="M3.3 3.3 L8.7 8.7 M8.7 3.3 L3.3 8.7" stroke="#fcfcfc" stroke-width="1"/></svg><div class="a" style="left:500px;top:66.3px;width:252px;height:0.6px;background:#dfe1e3"></div><div class="a" style="left:502.8px;top:68.7px;width:30.19999999999999px;height:12.3px;background:#f4f5f6;border:0.6px solid #cfd1d3;border-bottom:none;box-sizing:border-box"></div><div class="t" style="left:504.40px;top:71.42px;font-size:8.13px;line-height:8.13px;color:#1e2123;letter-spacing:-0.270px;">General</div><div class="a" style="left:533px;top:69px;width:19px;height:11.4px;background:#d8dadc;border:0.6px solid #c9cbcd;box-sizing:border-box"></div><div class="t" style="left:534.60px;top:71.42px;font-size:8.13px;line-height:8.13px;color:#1e2123;letter-spacing:-0.251px;">Line</div><div class="a" style="left:552px;top:69px;width:28.899999999999977px;height:11.4px;background:#d8dadc;border:0.6px solid #c9cbcd;box-sizing:border-box"></div><div class="t" style="left:553.60px;top:71.42px;font-size:8.13px;line-height:8.13px;color:#1e2123;letter-spacing:-0.296px;">Symbol</div><div class="a" style="left:580.9px;top:69px;width:26.800000000000068px;height:11.4px;background:#d8dadc;border:0.6px solid #c9cbcd;box-sizing:border-box"></div><div class="t" style="left:582.50px;top:71.42px;font-size:8.13px;line-height:8.13px;color:#1e2123;letter-spacing:-0.265px;">Values</div><div class="a" style="left:607.7px;top:69px;width:24.299999999999955px;height:11.4px;background:#d8dadc;border:0.6px solid #c9cbcd;box-sizing:border-box"></div><div class="t" style="left:609.30px;top:71.42px;font-size:8.13px;line-height:8.13px;color:#1e2123;letter-spacing:-0.198px;">Filling</div><div class="a" style="left:502.2px;top:80.5px;width:247px;height:307.8px;background:#f4f5f6;border:0.6px solid #d2d4d6;box-sizing:border-box"></div><div class="a" style="left:503px;top:80.5px;width:29.6px;height:1px;background:#f4f5f6"></div><div class="t" style="left:504.00px;top:84.72px;font-size:8.13px;line-height:8.13px;color:#1e2123;letter-spacing:-0.355px;">Name</div><div class="a" style="left:567.6px;top:82px;width:179.6px;height:12.1px;background:#fcfcfc;border:0.6px solid #dadcde;box-sizing:border-box;border-radius:1px"></div><div class="t" style="left:569.70px;top:84.72px;font-size:8.13px;line-height:8.13px;color:#1e2123;letter-spacing:-0.192px;">f(x)</div><div class="t" style="left:504.00px;top:98.52px;font-size:8.13px;line-height:8.13px;color:#1e2123;letter-spacing:-0.329px;">Comment</div><div class="a" style="left:567.6px;top:95.3px;width:179.6px;height:11.7px;background:#fcfcfc;border:0.6px solid #dadcde;box-sizing:border-box;border-radius:1px"></div><div class="t" style="left:569.70px;top:97.93px;font-size:8.59px;line-height:8.59px;color:#1e2123;letter-spacing:-0.256px;">http://mathworld.wolfram.com/ButterflyCurve.html</div><div class="a" style="left:503px;top:111.2px;width:245px;height:0.6px;background:#d9dbdd"></div><div class="t" style="left:504.00px;top:115.52px;font-size:8.13px;line-height:8.13px;color:#1e2123;letter-spacing:-0.250px;">Equation type</div><div class="a" style="left:567.4px;top:112.8px;width:179.8px;height:12.8px;background:#e6e8ea;border:0.6px solid #dadcde;box-sizing:border-box;border-radius:1px"></div><div class="t" style="left:569.50px;top:115.49px;font-size:8.40px;line-height:8.40px;color:#1e2123;letter-spacing:-0.260px;">parametric</div><svg class="a" style="left:740px;top:116px;" width="6" height="6" viewBox="0 0 6 6"><path d="M1 2 L3 4 L5 2" fill="none" stroke="#a0a3a5" stroke-width="0.6"/></svg><div class="t" style="left:504.00px;top:137.72px;font-size:8.13px;line-height:8.13px;color:#1e2123;letter-spacing:-0.204px;">x=f(t)</div><div class="a" style="left:567.4px;top:128px;width:164.9px;height:25.3px;background:#fcfcfc;border:0.6px solid #dadcde;box-sizing:border-box;border-radius:1px"></div><div class="t" style="left:569.20px;top:131.07px;font-size:7.60px;line-height:7.60px;color:#1e2123;letter-spacing:-0.1px;white-space:nowrap"><b style="color:#6e1414">sin</b><span style="color:#454a4f">(</span><span style="color:#1f7a1f">t</span><span style="color:#454a4f">)*(</span><b style="color:#6e1414">exp</b><span style="color:#454a4f">(</span><b style="color:#6e1414">cos</b><span style="color:#454a4f">(</span><span style="color:#1f7a1f">t</span><span style="color:#454a4f">))-2*</span><b style="color:#6e1414">cos</b><span style="color:#454a4f">(4*</span><span style="color:#1f7a1f">t</span><span style="color:#454a4f">)-</span><b style="color:#6e1414">pow</b><span style="color:#454a4f">(</span><b style="color:#6e1414">sin</b><span style="color:#454a4f">(</span><span style="color:#1f7a1f">t</span><span style="color:#454a4f">/12), 5))</span></div><div class="t" style="left:504.00px;top:168.32px;font-size:8.13px;line-height:8.13px;color:#1e2123;letter-spacing:-0.204px;">y=f(t)</div><div class="a" style="left:567.4px;top:158px;width:164.9px;height:26.2px;background:#fcfcfc;border:0.6px solid #dadcde;box-sizing:border-box;border-radius:1px"></div><div class="t" style="left:569.20px;top:161.37px;font-size:7.60px;line-height:7.60px;color:#1e2123;letter-spacing:-0.1px;white-space:nowrap"><b style="color:#6e1414">cos</b><span style="color:#454a4f">(</span><span style="color:#1f7a1f">t</span><span style="color:#454a4f">)*(</span><b style="color:#6e1414">exp</b><span style="color:#454a4f">(</span><b style="color:#6e1414">cos</b><span style="color:#454a4f">(</span><span style="color:#1f7a1f">t</span><span style="color:#454a4f">))-2*</span><b style="color:#6e1414">cos</b><span style="color:#454a4f">(4*</span><span style="color:#1f7a1f">t</span><span style="color:#454a4f">)-</span><b style="color:#6e1414">pow</b><span style="color:#454a4f">(</span><b style="color:#6e1414">sin</b><span style="color:#454a4f">(</span><span style="color:#1f7a1f">t</span><span style="color:#454a4f">/12),5))</span></div><div class="a" style="left:733.9px;top:128px;width:13.3px;height:12.4px;background:#f1f2f3;border:0.5px solid #e2e4e6;box-sizing:border-box"></div><svg class="a" style="left:735.4px;top:128.4px;will-change:transform" width="11" height="11" viewBox="0 0 11 11"><circle cx="5.5" cy="5.5" r="4.9" fill="#1e2123"/><text x="5.5" y="7.3" font-size="5" text-anchor="middle" fill="#c8c8c8" font-family="Liberation Sans">Aa</text></svg><div class="a" style="left:733.9px;top:140.4px;width:13.3px;height:12.9px;background:#f1f2f3;border:0.5px solid #e2e4e6;box-sizing:border-box"></div><div class="t" style="left:640.60px;width:200px;text-align:center;top:141.52px;font-size:11.50px;line-height:11.50px;color:#1e2123;">π</div><div class="a" style="left:733.9px;top:158.1px;width:13.3px;height:13.3px;background:#f1f2f3;border:0.5px solid #e2e4e6;box-sizing:border-box"></div><svg class="a" style="left:735.4px;top:158.95px;will-change:transform" width="11" height="11" viewBox="0 0 11 11"><circle cx="5.5" cy="5.5" r="4.9" fill="#1e2123"/><text x="5.5" y="7.3" font-size="5" text-anchor="middle" fill="#c8c8c8" font-family="Liberation Sans">Aa</text></svg><div class="a" style="left:733.9px;top:171.4px;width:13.3px;height:12.8px;background:#f1f2f3;border:0.5px solid #e2e4e6;box-sizing:border-box"></div><div class="t" style="left:640.60px;width:200px;text-align:center;top:172.47px;font-size:11.50px;line-height:11.50px;color:#1e2123;">π</div><div class="t" style="left:504.00px;top:193.32px;font-size:8.13px;line-height:8.13px;color:#1e2123;letter-spacing:-0.217px;">t, min</div><div class="a" style="left:567.7px;top:190.6px;width:89.7px;height:11.7px;background:#fcfcfc;border:0.6px solid #dadcde;box-sizing:border-box;border-radius:1px"></div><div class="t" style="left:569.50px;top:193.22px;font-size:8.13px;line-height:8.13px;color:#1e2123;letter-spacing:-0.296px;">0</div><div class="t" style="left:504.00px;top:207.12px;font-size:8.13px;line-height:8.13px;color:#1e2123;letter-spacing:-0.241px;">t, max</div><div class="a" style="left:567.7px;top:204.5px;width:89.7px;height:11.7px;background:#fcfcfc;border:0.6px solid #dadcde;box-sizing:border-box;border-radius:1px"></div><div class="t" style="left:569.50px;top:207.57px;font-size:7.60px;line-height:7.60px;color:#1e2123;">10*<b style="color:#6e1414">pi</b></div><div class="t" style="left:504.00px;top:223.52px;font-size:8.13px;line-height:8.13px;color:#1e2123;letter-spacing:-0.253px;">Number of points</div><div class="a" style="left:567.7px;top:220.9px;width:89.5px;height:12.5px;background:#fcfcfc;border:0.6px solid #dadcde;box-sizing:border-box;border-radius:1px"></div><div class="t" style="left:569.50px;top:223.72px;font-size:8.13px;line-height:8.13px;color:#1e2123;letter-spacing:-0.296px;">1000</div><svg class="a" style="left:653px;top:224px;" width="4" height="7" viewBox="0 0 4 7"><path d="M0.8 2.4 L2 1.2 L3.2 2.4 M0.8 4.6 L2 5.8 L3.2 4.6" fill="none" stroke="#a0a3a5" stroke-width="0.5"/></svg><div class="a" style="left:658.2px;top:234.2px;width:89.8px;height:15.4px;background:#dcdee0;border:0.6px solid #d0d2d4;box-sizing:border-box;border-radius:1px"></div><svg class="a" style="left:678.5px;top:237.5px;" width="9" height="9" viewBox="0 0 9 9"><circle cx="4.5" cy="4.5" r="3.5" fill="none" stroke="#a6a9ac" stroke-width="0.8"/><path d="M3.6 2.8 L6 4.5 L3.6 6.2 Z" fill="#a6a9ac"/></svg><div class="t" style="left:689.90px;top:238.71px;font-size:8.03px;line-height:8.03px;color:#a6a9ac;letter-spacing:-0.249px;">Recalculate</div><div class="a" style="left:504.5px;top:379.8px;width:3px;height:3.5px;background:#3daee9"></div><div class="t" style="left:509.20px;top:378.22px;font-size:8.13px;line-height:8.13px;color:#1e2123;letter-spacing:-0.211px;">visible</div><div class="a" style="left:712.4px;top:390.4px;width:10.6px;height:10.1px;background:#eceeef;border:0.6px solid #d3d5d7;box-sizing:border-box"></div><div class="a" style="left:723px;top:390.4px;width:11.3px;height:10.1px;background:#eceeef;border:0.6px solid #d3d5d7;box-sizing:border-box"></div><div class="a" style="left:734.3px;top:390.4px;width:11.2px;height:10.1px;background:#eceeef;border:0.6px solid #d3d5d7;box-sizing:border-box"></div><svg class="a" style="left:714.5px;top:392px;" width="7" height="7" viewBox="0 0 7 7"><path d="M0.5 1 H3 L3.6 1.8 H6.5 V6.5 H0.5 Z" fill="none" stroke="#9a9d9f" stroke-width="0.7"/></svg><svg class="a" style="left:725.6px;top:392px;" width="7" height="7" viewBox="0 0 7 7"><path d="M0.5 0.5 H6.5 V6.5 H0.5 Z" fill="none" stroke="#9a9d9f" stroke-width="0.7"/><rect x="2" y="0.5" width="3" height="2" fill="#31363b"/></svg><svg class="a" style="left:736.8px;top:392px;" width="7" height="7" viewBox="0 0 7 7"><path d="M0.5 0.5 H5 L6.5 2 V6.5 H0.5 Z" fill="none" stroke="#9a9d9f" stroke-width="0.7"/><path d="M2.5 5 L6 2" stroke="#31363b" stroke-width="0.7"/></svg><div class="a" style="left:500px;top:403.8px;width:252px;height:0.6px;background:#d9dbdd"></div><div class="a" style="left:750.5px;top:52px;width:0.6px;height:352px;background:#dcdee0"></div>
</body></html>
